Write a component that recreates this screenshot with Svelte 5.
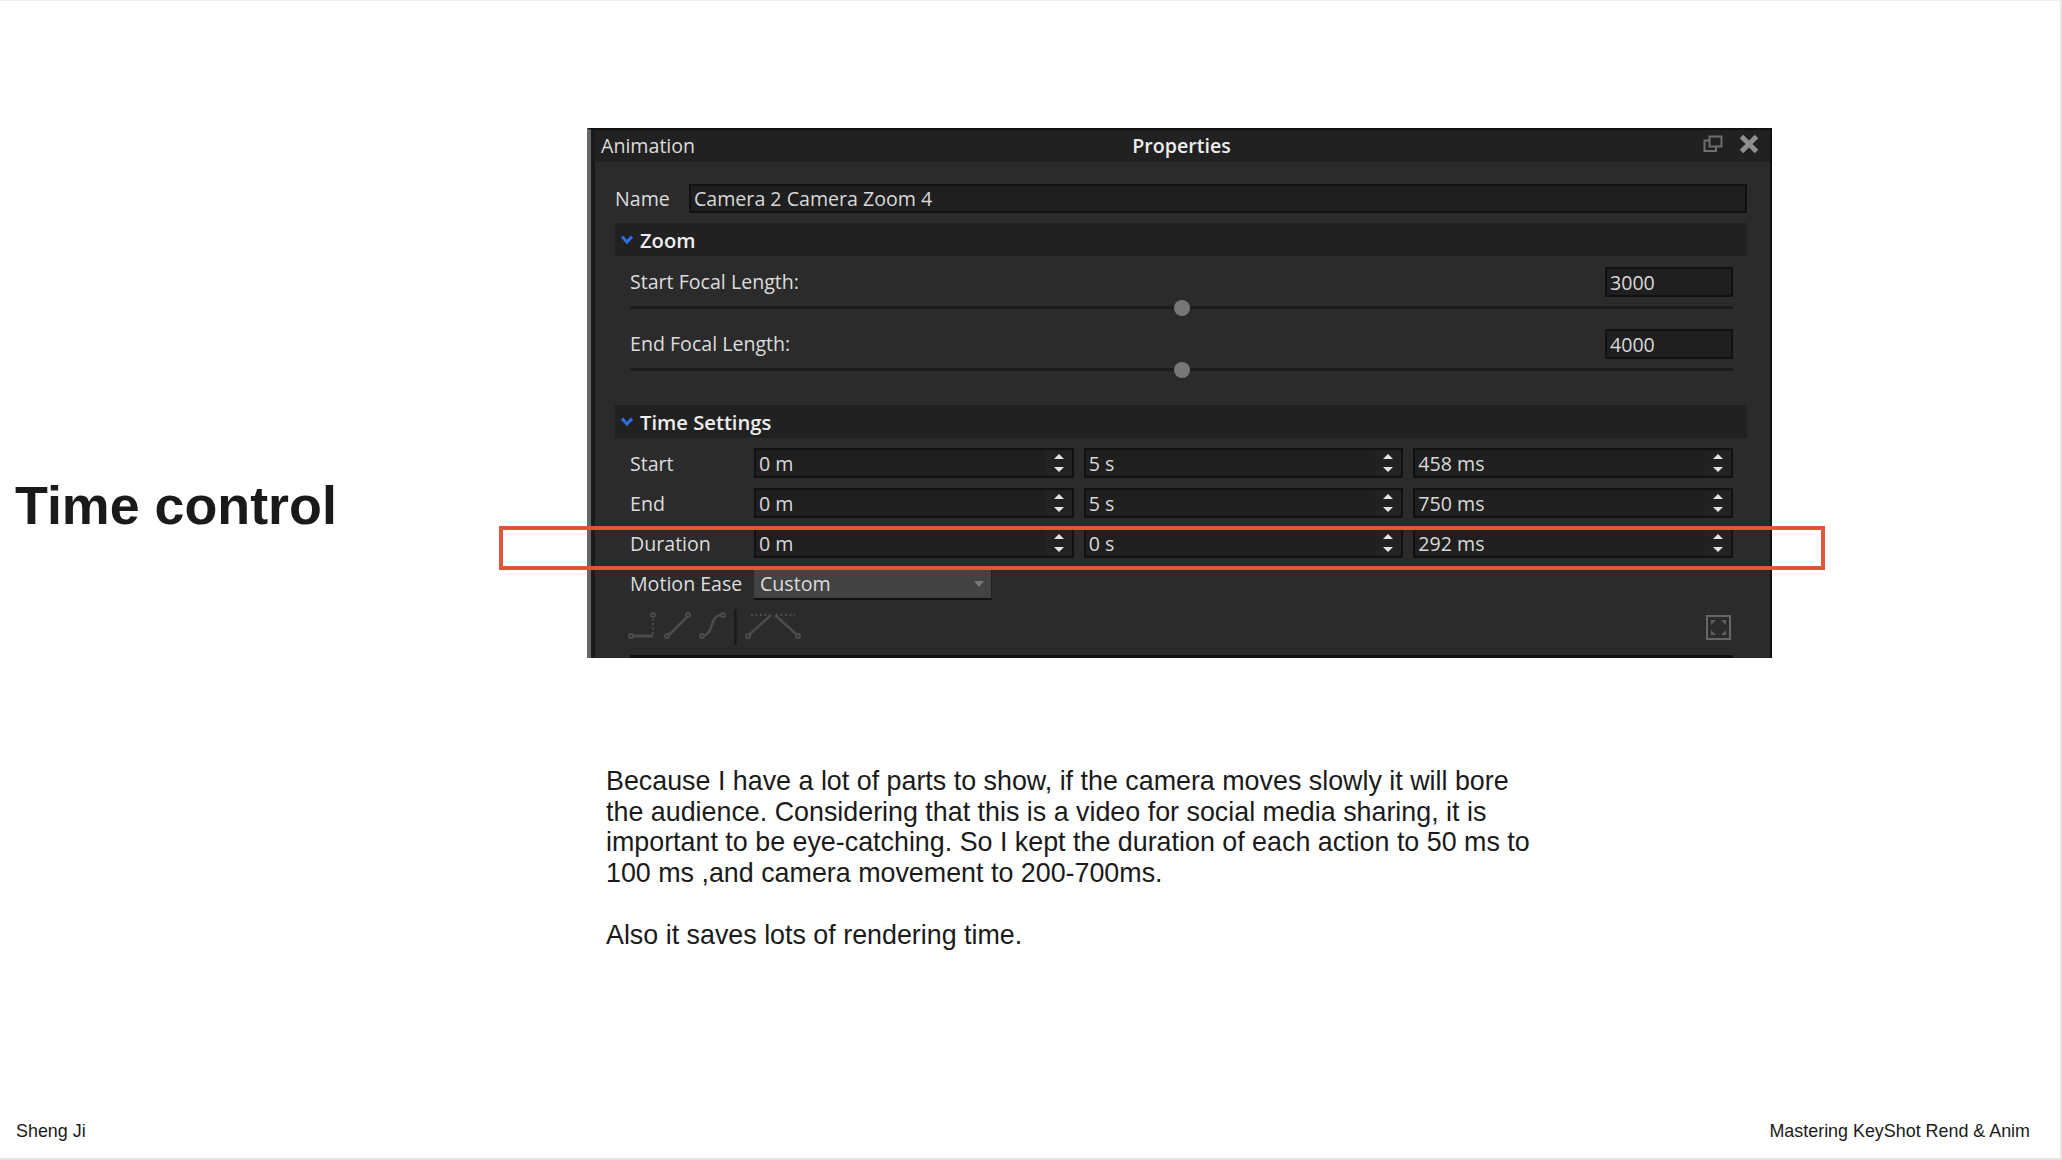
<script>
  const timeRows = [
    { label: 'Start', values: ['0 m', '5 s', '458 ms'] },
    { label: 'End', values: ['0 m', '5 s', '750 ms'] },
    { label: 'Duration', values: ['0 m', '0 s', '292 ms'] }
  ];

  const focal = [
    { label: 'Start Focal Length:', value: '3000' },
    { label: 'End Focal Length:', value: '4000' }
  ];
</script>

<div class="slide">
  <div class="top">
    <h1>Time control</h1>
    <div class="panel">
      <div class="titlebar">
        <span class="tab">Animation</span>
        <span class="title">Properties</span>
        <div class="win-icons">
          <svg width="20" height="18" viewBox="0 0 20 18" fill="none" stroke="#6e6e6e" stroke-width="2">
            <rect x="6.500" y="1.500" width="12" height="10" />
            <path d="M6.500 5.500H1.500V16H13V11.500" />
          </svg>
          <svg width="20" height="20" viewBox="0 0 20 20" fill="none" stroke="#8f8f8f" stroke-width="5">
            <path d="M2.500 2.500L17.500 17.500M17.500 2.500L2.500 17.500" />
          </svg>
        </div>
      </div>

      <div class="body">
        <div class="name-row">
          <span class="name-label">Name</span>
          <div class="field name-field">Camera 2 Camera Zoom 4</div>
        </div>

        <div class="section-head">
          <svg class="chev" width="12" height="9" viewBox="0 0 12 9" fill="none" stroke="#2f6fe0" stroke-width="3">
            <path d="M1 1.500L6 7L11 1.500" />
          </svg>
          Zoom
        </div>

        <div class="focal-group">
          {#each focal as f}
            <div class="focal">
              <div class="focal-line">
                <span>{f.label}</span>
                <div class="field focal-field">{f.value}</div>
              </div>
              <div class="slider"><span class="thumb"></span></div>
            </div>
          {/each}
        </div>

        <div class="section-head time-head">
          <svg class="chev" width="12" height="9" viewBox="0 0 12 9" fill="none" stroke="#2f6fe0" stroke-width="3">
            <path d="M1 1.500L6 7L11 1.500" />
          </svg>
          Time Settings
        </div>

        <div class="time-group">
          {#each timeRows as row}
            <div class="time-row">
              <span class="row-label">{row.label}</span>
              {#each row.values as v}
                <div class="field spin">
                  <span>{v}</span>
                  <div class="spin-btns">
                    <span class="btn"><span class="up"></span></span>
                    <span class="btn"><span class="down"></span></span>
                  </div>
                </div>
              {/each}
            </div>
          {/each}
          <div class="time-row">
            <span class="row-label">Motion Ease</span>
            <div class="select">
              <span>Custom</span>
              <span class="caret"></span>
            </div>
          </div>
        </div>

        <div class="curve-bar">
          <svg width="176" height="40" viewBox="0 0 176 40" fill="none" stroke="#4c4c4c" stroke-width="2">
            <path d="M7 29H28" stroke-width="3" />
            <path d="M28 27V12" stroke-dasharray="2 2.500" />
            <circle cx="6" cy="29" r="2" />
            <circle cx="28" cy="8" r="2" />
            <path d="M43 29L62 10" stroke-width="2.500" />
            <circle cx="42" cy="29" r="2" />
            <circle cx="63" cy="8" r="2" />
            <path d="M78 29C90 26 84 9 96 8" stroke-width="2.500" />
            <circle cx="77" cy="29" r="2" />
            <circle cx="98" cy="8" r="2" />
            <path d="M110.500 2V38" stroke="#161616" />
            <path d="M124 28L146 8M150 8L172 28" stroke-width="2.500" />
            <path d="M126 8H145M151 8H170" stroke-dasharray="2 2.500" />
            <circle cx="123" cy="29" r="2" />
            <circle cx="173" cy="29" r="2" />
          </svg>
          <svg class="fit" width="25" height="25" viewBox="0 0 25 25" fill="none">
            <rect x="1" y="1" width="23" height="23" stroke="#666" stroke-width="2" />
            <path d="M5 5H10L5 10ZM20 5H15L20 10ZM5 20H10L5 15ZM20 20H15L20 15Z" fill="#5f5f5f" />
          </svg>
        </div>
        <div class="bottom-line"></div>
      </div>

      <div class="highlight"></div>
    </div>
  </div>

  <div class="copy">
    <p>Because I have a lot of parts to show, if the camera moves slowly it will bore<br />the audience. Considering that this is a video for social media sharing, it is<br />important to be eye-catching. So I kept the duration of each action to 50 ms to<br />100 ms ,and camera movement to 200-700ms.</p>
    <p>Also it saves lots of rendering time.</p>
  </div>

  <div class="footer">
    <span>Sheng Ji</span>
    <span>Mastering KeyShot Rend &amp; Anim</span>
  </div>
</div>

<style>
  :global(body) {
    margin: 0;
    background: #fff;
  }

  .slide {
    height: 1160px;
    box-sizing: border-box;
    display: flex;
    flex-direction: column;
    font-family: "Liberation Sans", Arial, sans-serif;
    color: #1a1a1a;
    overflow: hidden;
    border-top: 1px solid #f0f0f0;
    border-right: 2px solid #e6e6e6;
    border-bottom: 2px solid #e6e6e6;
  }

  .top {
    display: flex;
    align-items: flex-start;
    padding-top: 127px;
  }

  h1 {
    width: 572px;
    margin: 351px 0 0 15px;
    font-size: 53.800px;
    font-weight: 700;
    line-height: 1;
  }

  .panel {
    position: relative;
    width: 1185px;
    height: 530px;
    box-sizing: border-box;
    background: #2b2b2b;
    border-left: 4px solid #666;
    border-top: 2px solid #111;
    border-right: 2px solid #111;
    color: #dcdcdc;
    font-family: "Open Sans", sans-serif;
    font-size: 19.600px;
    display: flex;
    flex-direction: column;
  }

  .titlebar {
    position: relative;
    flex: none;
    height: 32px;
    display: flex;
    align-items: center;
    justify-content: center;
    background: #212121;
    border-left: 4px solid #1a1a1a;
  }

  .tab {
    position: absolute;
    left: 6px;
    top: 2px;
  }

  .title {
    font-weight: 600;
    color: #eee;
    margin: -2px 2px 0 0;
  }

  .win-icons {
    position: absolute;
    right: 11px;
    top: 4px;
    display: flex;
    gap: 16px;
    align-items: center;
  }

  .body {
    flex: 1;
    display: flex;
    flex-direction: column;
    padding: 22px 23px 0 20px;
    border-left: 4px solid #1a1a1a;
  }

  .field {
    box-sizing: border-box;
    background: #1f1f1f;
    border: 2px solid #111;
    color: #d8d8d8;
    display: flex;
    align-items: center;
    padding-left: 3px;
  }

  .name-row {
    display: flex;
    align-items: center;
    height: 29px;
  }

  .name-label {
    width: 74px;
  }

  .name-field {
    flex: 1;
    height: 29px;
  }

  .section-head {
    display: flex;
    align-items: center;
    gap: 7px;
    height: 33px;
    margin-top: 10px;
    padding-left: 6px;
    background: #212121;
    font-weight: 600;
    color: #eee;
    font-size: 20.200px;
  }

  .focal-group {
    display: flex;
    flex-direction: column;
    gap: 20px;
    padding: 11px 14px 0 15px;
  }

  .focal-line {
    display: flex;
    justify-content: space-between;
    align-items: center;
    height: 30px;
  }

  .focal-line span {
    margin-top: -2px;
  }

  .focal-field {
    width: 128px;
    height: 30px;
  }

  .slider {
    position: relative;
    height: 3px;
    margin-top: 9px;
    background: #1c1c1c;
  }

  .thumb {
    position: absolute;
    left: 50%;
    top: 50%;
    width: 16px;
    height: 16px;
    margin: -8px 0 0 -8px;
    border-radius: 50%;
    background: #777;
  }

  .time-head {
    margin-top: 34px;
  }

  .time-group {
    display: flex;
    flex-direction: column;
    gap: 10px;
    padding: 10px 14px 0 15px;
  }

  .time-row {
    display: flex;
    align-items: center;
    gap: 10px;
    height: 30px;
  }

  .row-label {
    width: 114px;
    flex: none;
  }

  .spin {
    flex: 1;
    height: 30px;
    justify-content: space-between;
    padding-right: 0;
  }

  .spin-btns {
    width: 26px;
    height: 26px;
    display: flex;
    flex-direction: column;
    gap: 1px;
  }

  .btn {
    flex: 1;
    display: flex;
    align-items: center;
    justify-content: center;
    background: #222;
  }

  .up,
  .down,
  .caret {
    width: 0;
    height: 0;
    border-left: 5px solid transparent;
    border-right: 5px solid transparent;
  }

  .up {
    border-bottom: 5px solid #e4e4e4;
  }

  .down {
    border-top: 5px solid #e4e4e4;
  }

  .select {
    box-sizing: border-box;
    width: 238px;
    height: 31px;
    margin-top: 2px;
    display: flex;
    align-items: center;
    justify-content: space-between;
    padding: 0 7px 0 6px;
    background: #434343;
    border-bottom: 2px solid #111;
    border-right: 1px solid #222;
    color: #ddd;
  }

  .caret {
    border-top: 6px solid #777;
    margin-top: 2px;
  }

  .curve-bar {
    display: flex;
    justify-content: space-between;
    align-items: center;
    height: 40px;
    margin-top: 9px;
    padding: 0 16px 0 10px;
  }

  .bottom-line {
    height: 3px;
    margin: auto 14px 0 15px;
    background: #111;
  }

  .highlight {
    position: absolute;
    left: -92px;
    top: 396px;
    width: 1326px;
    height: 44px;
    box-sizing: border-box;
    border: 4px solid #e0563b;
  }

  .copy {
    margin: 108px 0 0 606px;
    font-size: 26.850px;
    line-height: 30.700px;
  }

  .copy p {
    margin: 0 0 30.700px;
  }

  .footer {
    margin-top: auto;
    display: flex;
    justify-content: space-between;
    padding: 0 30px 16px 16px;
    font-size: 17.900px;
  }
</style>
